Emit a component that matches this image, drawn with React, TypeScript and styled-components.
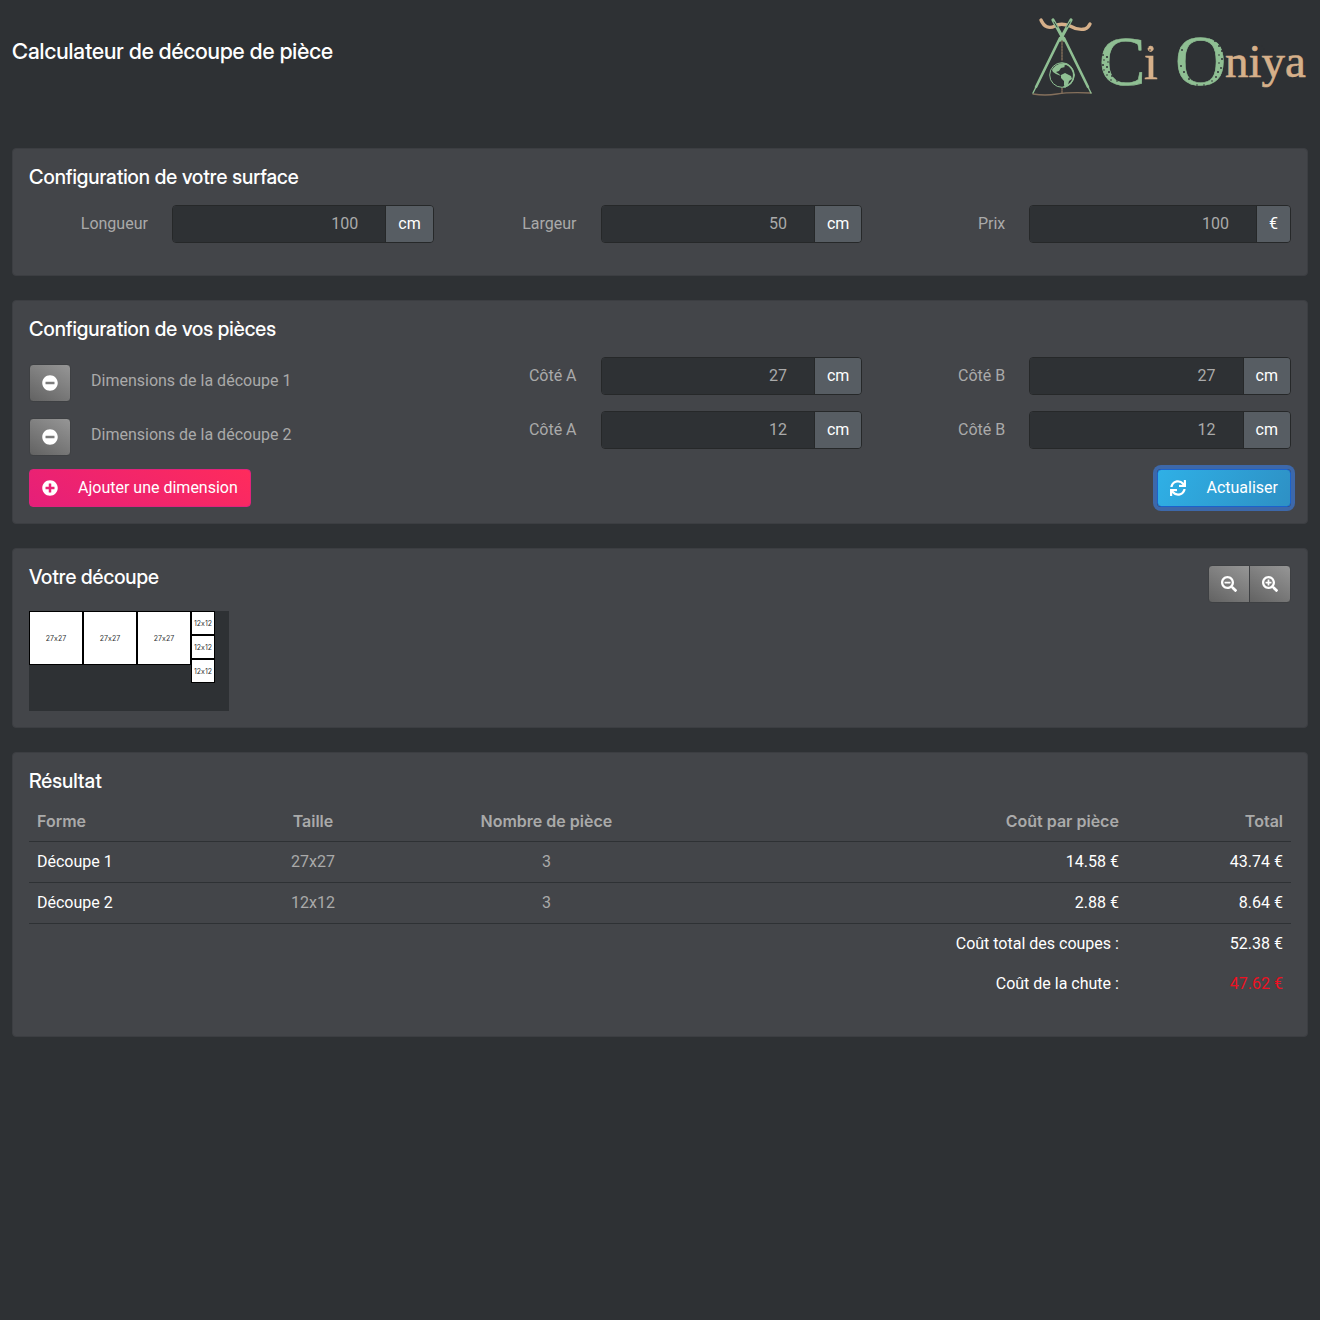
import React, { useState } from "react";
import styled, { createGlobalStyle, css } from "styled-components";
import {
  FaMinusCircle,
  FaPlusCircle,
  FaSearchMinus,
  FaSearchPlus,
  FaSync,
} from "react-icons/fa";

const color = {
  page: "#2e3134",
  card: "#434549",
  cardEdge: "#3c3e42",
  text: "#aaaaaa",
  strong: "#ffffff",
  line: "#2e3134",
  field: "#2e3134",
  fieldEdge: "#262829",
  addon: "#575d63",
  danger: "#ee1122",
};

const font = {
  body: 'Roboto, "Liberation Sans", sans-serif',
  title: '"Inter Display", Inter, sans-serif',
  label: "Inter, sans-serif",
};

const GlobalStyle = createGlobalStyle`
  *, *::before, *::after { box-sizing: border-box; }
  body {
    margin: 0;
    background: ${color.page};
    color: ${color.text};
    font-family: ${font.body};
    font-size: 16px;
    line-height: 24px;
  }
`;

const Page = styled.div`
  padding: 0 12px 24px;
`;

const Header = styled.header`
  display: flex;
  justify-content: space-between;
  align-items: flex-start;
  padding-bottom: 44px;
`;

const PageTitle = styled.h1`
  margin: 0;
  padding-top: 38px;
  color: ${color.strong};
  font-family: ${font.title};
  font-size: 22px;
  font-weight: 500;
  line-height: 26px;
`;

const LogoDrawing = styled.svg`
  display: block;
  width: 280px;
  height: 104px;
  overflow: visible;
`;

const Sections = styled.main`
  display: flex;
  flex-direction: column;
  gap: 24px;
`;

const Card = styled.section`
  padding: 16px;
  background: ${color.card};
  border: 1px solid ${color.cardEdge};
  border-radius: 4px;
`;

const CardTitle = styled.h2`
  margin: 0 0 8px;
  color: ${color.strong};
  font-family: ${font.title};
  font-size: 20px;
  font-weight: 500;
  line-height: 24px;
`;

const FieldRow = styled.div`
  display: grid;
  grid-template-columns: repeat(9, minmax(0, 1fr));
  column-gap: 24px;
  padding: 8px 0;
`;

const SurfaceRow = styled(FieldRow)`
  padding-bottom: 16px;
`;

const FieldLabel = styled.label`
  padding: 7px 0;
  text-align: right;
  white-space: nowrap;
`;

const InputGroup = styled.div`
  grid-column: span 2;
  display: flex;
  height: 38px;
  border: 1px solid ${color.fieldEdge};
  border-radius: 4px;
  overflow: hidden;
`;

const NumberInput = styled.input`
  flex: 1;
  min-width: 0;
  padding: 0 27px 0 12px;
  border: 0;
  outline: 0;
  background: ${color.field};
  color: ${color.text};
  font: inherit;
  text-align: right;
  appearance: textfield;
  &::-webkit-inner-spin-button {
    display: none;
  }
`;

const Addon = styled.span`
  padding: 6px 12px;
  border-left: 1px solid ${color.fieldEdge};
  background: ${color.addon};
  color: ${color.strong};
`;

const CutName = styled.div`
  grid-column: span 3;
  display: flex;
  align-items: flex-start;
  gap: 20px;
  padding-top: 7px;
  margin-bottom: -8px;
  line-height: 34px;
  white-space: nowrap;
`;

const tones = {
  grey: css`
    border-color: #3e4043;
    background: linear-gradient(30deg, #626262, #969696);
  `,
  pink: css`
    border-color: #e0237c;
    background: linear-gradient(30deg, #e51f79, #ff2b5c);
  `,
  blue: css`
    border-color: #1b62cc;
    background: linear-gradient(120deg, #2fb0e6, #2e90c4);
    box-shadow: 0 0 0 4px #3d68aa;
  `,
};

const Button = styled.button<{ $tone: keyof typeof tones }>`
  display: inline-flex;
  align-items: center;
  justify-content: center;
  gap: 20px;
  height: 38px;
  padding: 0 12px;
  border: 1px solid;
  border-radius: 4px;
  color: ${color.strong};
  font: inherit;
  cursor: pointer;
  ${(p) => tones[p.$tone]}
`;

const ButtonGroup = styled.div`
  display: flex;
  & > button:first-child {
    border-radius: 4px 0 0 4px;
  }
  & > button + button {
    margin-left: -1px;
    border-radius: 0 4px 4px 0;
  }
`;

const Bar = styled.div<{ $top?: number; $bottom?: number }>`
  display: flex;
  justify-content: space-between;
  padding-top: ${(p) => p.$top ?? 0}px;
  padding-bottom: ${(p) => p.$bottom ?? 0}px;
`;

const Sheet = styled.div`
  position: relative;
  background: ${color.field};
`;

const Piece = styled.div`
  position: absolute;
  display: flex;
  align-items: center;
  justify-content: center;
  padding-top: 2px;
  border: 1px solid #000;
  background: #fff;
  color: #303234;
  font-family: ${font.label};
  font-size: 7px;
  font-variant-ligatures: no-contextual;
  line-height: 10px;
`;

const ResultTable = styled.table`
  width: 100%;
  margin-bottom: 16px;
  border-collapse: separate;
  border-spacing: 0;
`;

const Row = styled.tr<{ $plain?: boolean }>`
  & > * {
    border-bottom: ${(p) => (p.$plain ? "0" : `1px solid ${color.line}`)};
  }
`;

type CellProps = { $align?: "left" | "center" | "right"; $ink?: string };

const HeadCell = styled.th<CellProps & { $width: number }>`
  width: ${(p) => p.$width}%;
  padding: 8px;
  font-family: ${font.label};
  font-weight: 600;
  text-align: ${(p) => p.$align ?? "left"};
`;

const Cell = styled.td<CellProps>`
  padding: 8px;
  color: ${(p) => p.$ink ?? color.strong};
  text-align: ${(p) => p.$align ?? "left"};
`;

const RowHead = styled(Cell).attrs({ as: "th", scope: "row" })`
  font-weight: 400;
`;

const GREEN = "#8fbf93";
const SAND = "#d6b08a";

/* Worn spots in the lettering: x, y, radius */
const specks: [number, number, number][] = [
  [75, 55, 0.9], [79, 57, 1.1], [76, 60, 0.8], [80, 62, 0.8], [75, 65, 1], [79, 67, 1],
  [76, 70, 0.8], [81, 72, 1], [79, 75, 0.8], [84, 76, 0.9], [83, 80, 0.8], [89, 81, 0.8],
  [154, 50, 0.9], [153, 66, 0.9], [156, 72, 1], [161, 79, 0.9], [169, 85, 0.8], [176, 85, 0.8],
  [183, 38, 0.9], [187, 41, 1], [191, 46, 0.9], [194, 51, 1], [191, 55, 0.8], [194, 59, 1],
  [191, 63, 0.8], [193, 68, 0.9], [190, 72, 1], [188, 77, 0.9], [184, 81, 0.8],
  [120, 47, 0.8], [122, 50, 0.8], [234, 46, 0.8], [236, 49, 0.8],
  [260, 63, 0.7], [266, 60, 0.7], [270, 66, 0.7],
];

const Logo = () => (
  <LogoDrawing viewBox="0 0 280 104" role="img" aria-label="Ci Oniya">
    <g fill="none" strokeLinecap="round" strokeLinejoin="round">
      <path d="M34 40V61M34 88v5" stroke="#7d6a57" strokeWidth="1.5" strokeDasharray="2 1" />
      <path d="M5 94q12 2 24 0t34-1" stroke="#85705c" strokeWidth="1.3" />
      <path
        d="M13 20c3 7 8 9 14 6 5-3 10-2 15 0 5 3 10 4 15 3 3-1 4-3 5-5"
        stroke={SAND}
        strokeWidth="3.4"
      />
      <path d="M25 20L36 40M43 20L32 40" stroke={GREEN} strokeWidth="3.2" />
      <path d="M26 22l3 5M42 22l-3 5" stroke={color.page} strokeWidth="0.9" />
      <path d="M36 38L60 87M32 38L8 87" stroke={GREEN} strokeWidth="2.6" />
      <path d="M60 87l3 6M8 87l-3 6" stroke={GREEN} strokeWidth="1.4" />
      <circle cx="34" cy="75" r="12.3" stroke={GREEN} strokeWidth="1" />
      <path d="M38 64a12 12 0 0 1-2 23" stroke={GREEN} strokeWidth="1.6" />
    </g>
    <path
      d="M24 70c2-4 7-7 12-7l3 1-3 2 1 1-4 1-2 3-3 1 3 2 2 2-5-2-3-2zM33 75l4-2 6 3 1 3-3 2-1 4-3 3-1-3 0-4-3-3z"
      fill={GREEN}
    />
    <g fontFamily='"Liberation Serif", serif' strokeWidth="0.6">
      <text x="71" y="85" fontSize="70" fill={GREEN} stroke={GREEN}>C</text>
      <text x="116" y="79" fontSize="50" fill={SAND} stroke={SAND}>i</text>
      <text x="147" y="85" fontSize="71" fill={GREEN} stroke={GREEN}>O</text>
      <text x="197" y="77" fontSize="47" fill={SAND} stroke={SAND}>niya</text>
    </g>
    <g fill={color.page}>
      {specks.map(([x, y, r]) => (
        <circle key={`${x}-${y}`} cx={x} cy={y} r={r} />
      ))}
    </g>
  </LogoDrawing>
);

type FieldProps = { id: string; label: string; unit: string; value: number };

const Field = ({ id, label, unit, value }: FieldProps) => (
  <>
    <FieldLabel htmlFor={id}>{label}</FieldLabel>
    <InputGroup>
      <NumberInput id={id} type="number" defaultValue={value} />
      <Addon>{unit}</Addon>
    </InputGroup>
  </>
);

const cuts = [
  { size: 27, cost: "14.58 €", total: "43.74 €", count: 3 },
  { size: 12, cost: "2.88 €", total: "8.64 €", count: 3 },
];

const placed = [
  { x: 0, y: 0, size: 27 },
  { x: 27, y: 0, size: 27 },
  { x: 54, y: 0, size: 27 },
  { x: 81, y: 0, size: 12 },
  { x: 81, y: 12, size: 12 },
  { x: 81, y: 24, size: 12 },
];

export default function App() {
  const [scale, setScale] = useState(2);

  return (
    <>
      <GlobalStyle />
      <Page>
        <Header>
          <PageTitle>Calculateur de découpe de pièce</PageTitle>
          <Logo />
        </Header>
        <Sections>
          <Card>
            <CardTitle>Configuration de votre surface</CardTitle>
            <SurfaceRow>
              <Field id="length" label="Longueur" unit="cm" value={100} />
              <Field id="width" label="Largeur" unit="cm" value={50} />
              <Field id="price" label="Prix" unit="€" value={100} />
            </SurfaceRow>
          </Card>

          <Card>
            <CardTitle>Configuration de vos pièces</CardTitle>
            {cuts.map((cut, i) => (
              <FieldRow key={cut.size}>
                <CutName>
                  <Button $tone="grey" type="button" aria-label={`Supprimer la découpe ${i + 1}`}>
                    <FaMinusCircle />
                  </Button>
                  <span>Dimensions de la découpe {i + 1}</span>
                </CutName>
                <Field id={`a${i}`} label="Côté A" unit="cm" value={cut.size} />
                <Field id={`b${i}`} label="Côté B" unit="cm" value={cut.size} />
              </FieldRow>
            ))}
            <Bar $top={12}>
              <Button $tone="pink" type="button">
                <FaPlusCircle />
                Ajouter une dimension
              </Button>
              <Button $tone="blue" type="button">
                <FaSync />
                Actualiser
              </Button>
            </Bar>
          </Card>

          <Card>
            <Bar $bottom={8}>
              <CardTitle>Votre découpe</CardTitle>
              <ButtonGroup>
                <Button
                  $tone="grey"
                  type="button"
                  aria-label="Zoom arrière"
                  onClick={() => setScale((s) => Math.max(1, s - 1))}
                >
                  <FaSearchMinus />
                </Button>
                <Button
                  $tone="grey"
                  type="button"
                  aria-label="Zoom avant"
                  onClick={() => setScale((s) => s + 1)}
                >
                  <FaSearchPlus />
                </Button>
              </ButtonGroup>
            </Bar>
            <Sheet style={{ width: 100 * scale, height: 50 * scale }}>
              {placed.map((p) => (
                <Piece
                  key={`${p.x}-${p.y}`}
                  style={{
                    left: p.x * scale,
                    top: p.y * scale,
                    width: p.size * scale,
                    height: p.size * scale,
                  }}
                >
                  {p.size}x{p.size}
                </Piece>
              ))}
            </Sheet>
          </Card>

          <Card>
            <CardTitle>Résultat</CardTitle>
            <ResultTable>
              <thead>
                <Row>
                  <HeadCell $width={17}>Forme</HeadCell>
                  <HeadCell $width={11} $align="center">Taille</HeadCell>
                  <HeadCell $width={26} $align="center">Nombre de pièce</HeadCell>
                  <HeadCell $width={33} $align="right">Coût par pièce</HeadCell>
                  <HeadCell $width={13} $align="right">Total</HeadCell>
                </Row>
              </thead>
              <tbody>
                {cuts.map((cut, i) => (
                  <Row key={cut.size}>
                    <RowHead>Découpe {i + 1}</RowHead>
                    <Cell $align="center" $ink={color.text}>{cut.size}x{cut.size}</Cell>
                    <Cell $align="center" $ink={color.text}>{cut.count}</Cell>
                    <Cell $align="right">{cut.cost}</Cell>
                    <Cell $align="right">{cut.total}</Cell>
                  </Row>
                ))}
              </tbody>
              <tfoot>
                <Row $plain>
                  <RowHead colSpan={4} $align="right">Coût total des coupes :</RowHead>
                  <Cell $align="right">52.38 €</Cell>
                </Row>
                <Row $plain>
                  <RowHead colSpan={4} $align="right">Coût de la chute :</RowHead>
                  <Cell $align="right" $ink={color.danger}>47.62 €</Cell>
                </Row>
              </tfoot>
            </ResultTable>
          </Card>
        </Sections>
      </Page>
    </>
  );
}
